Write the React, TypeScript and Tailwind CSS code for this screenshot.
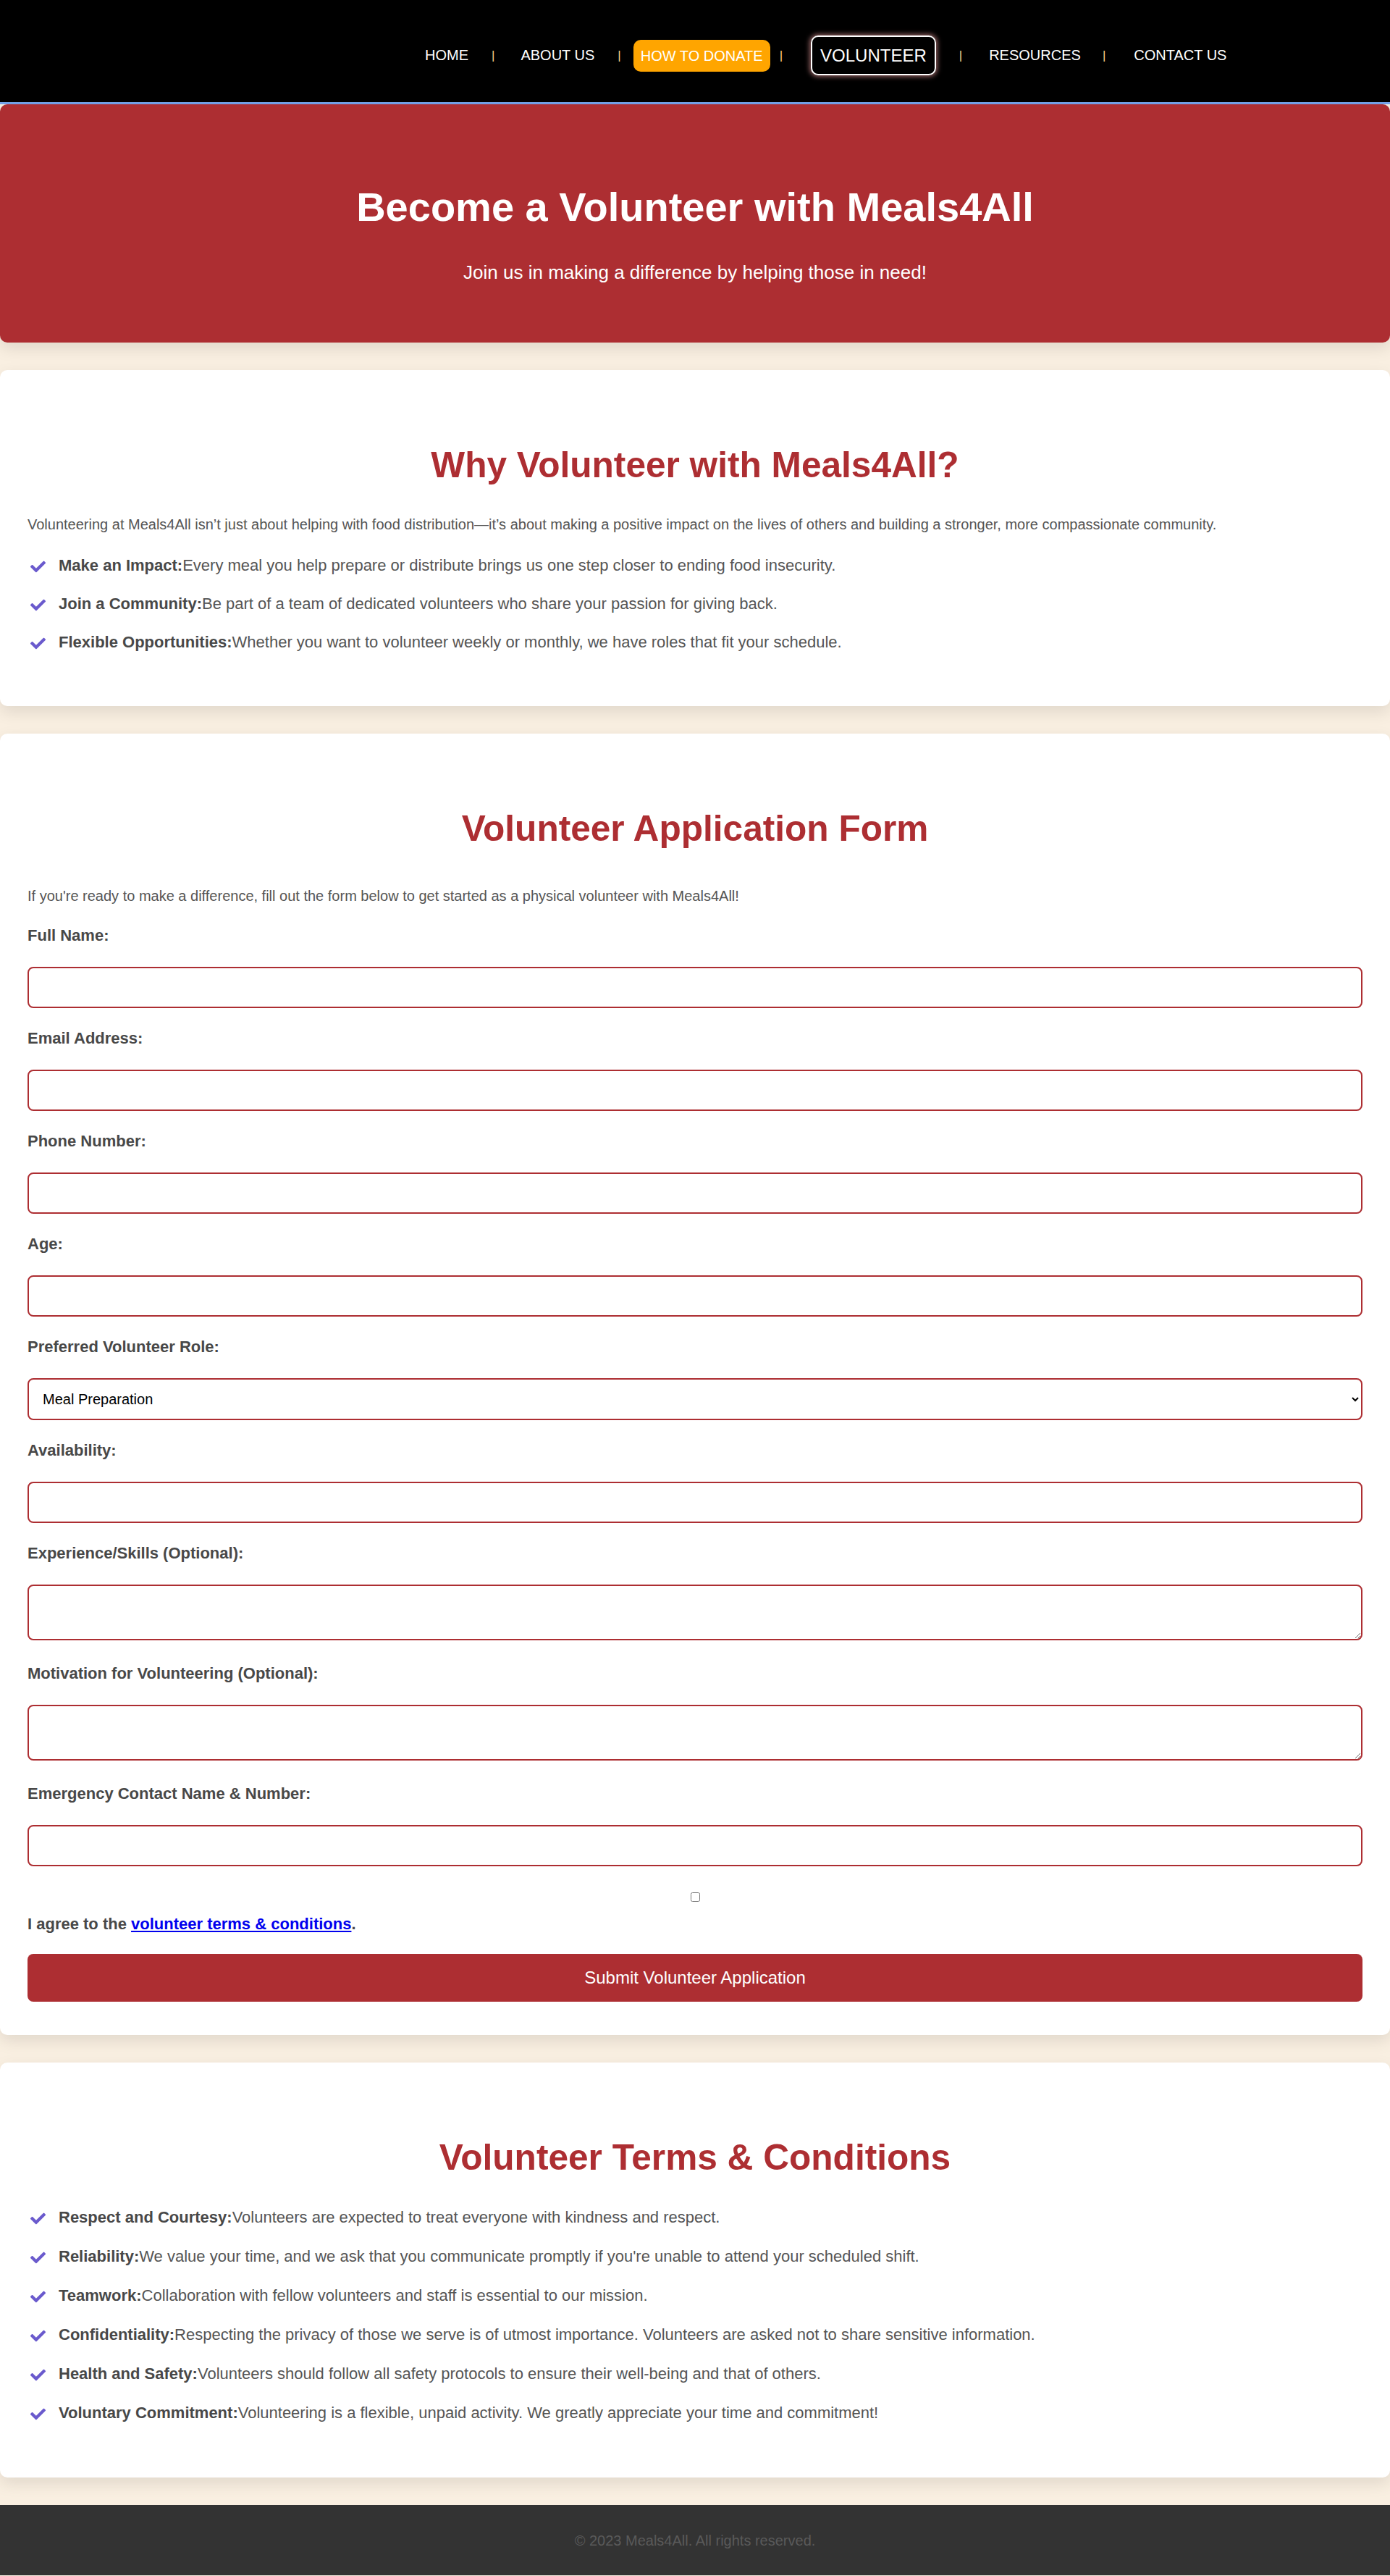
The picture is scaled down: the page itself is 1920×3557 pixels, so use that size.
import React from 'react';
import { FaCheck } from 'react-icons/fa';

const red = 'text-[#ad2e32]';

const whyItems = [
  ['Make an Impact:', 'Every meal you help prepare or distribute brings us one step closer to ending food insecurity.'],
  ['Join a Community:', 'Be part of a team of dedicated volunteers who share your passion for giving back.'],
  ['Flexible Opportunities:', 'Whether you want to volunteer weekly or monthly, we have roles that fit your schedule.'],
];

const terms = [
  ['Respect and Courtesy:', 'Volunteers are expected to treat everyone with kindness and respect.'],
  ['Reliability:', "We value your time, and we ask that you communicate promptly if you're unable to attend your scheduled shift."],
  ['Teamwork:', 'Collaboration with fellow volunteers and staff is essential to our mission.'],
  ['Confidentiality:', 'Respecting the privacy of those we serve is of utmost importance. Volunteers are asked not to share sensitive information.'],
  ['Health and Safety:', 'Volunteers should follow all safety protocols to ensure their well-being and that of others.'],
  ['Voluntary Commitment:', 'Volunteering is a flexible, unpaid activity. We greatly appreciate your time and commitment!'],
];

const CheckList = ({ items, gap }: { items: string[][]; gap: string }) => (
  <ul className={`flex flex-col ${gap}`}>
    {items.map(([title, text]) => (
      <li key={title} className="flex items-start gap-[18px] text-[22px] leading-[25px] text-[#555]">
        <FaCheck className="ml-[4px] mt-[4px] w-[21px] h-[21px] shrink-0 text-[#6a5acd]" />
        <span>
          <strong className="font-bold text-[#484848]">{title}</strong>
          {text}
        </span>
      </li>
    ))}
  </ul>
);

const Label = ({ children }: { children: React.ReactNode }) => (
  <label className="block text-[22px] leading-[25px] font-bold text-[#484848] mb-[31px]">{children}</label>
);

const inputCls =
  'block w-full h-[57px] border-2 border-[#ad2e32] rounded-[8px] px-[15px] text-[20px] bg-white mb-[29px]';
const areaCls =
  'block w-full h-[77px] border-2 border-[#ad2e32] rounded-[8px] px-[15px] py-[10px] text-[20px] bg-white mb-[33px]';

const Sep = ({ ml }: { ml: string }) => (
  <span className={`${ml} text-[17px] leading-[18px] text-[#ffd28a]`}>|</span>
);

export default function App() {
  return (
    <div className="min-h-screen bg-[#f9efe1] font-['Liberation_Sans',Arial,sans-serif]">
      {/* Navigation */}
      <nav className="h-[144px] bg-black border-b-[3px] border-[#74a3ea] flex items-center pl-[577px] pt-[12px] text-white text-[20px]">
        <a className="px-[10px] leading-[23px]">HOME</a>
        <Sep ml="ml-[22px]" />
        <a className="ml-[26px] px-[10px] leading-[23px]">ABOUT US</a>
        <Sep ml="ml-[22px]" />
        <a className="ml-[17px] px-[10px] h-[44px] flex items-center rounded-[10px] bg-[#ffa500]">HOW TO DONATE</a>
        <Sep ml="ml-[13px]" />
        <a className="ml-[39px] px-[11px] h-[55px] flex items-center rounded-[10px] border-2 border-white text-[24px] shadow-[0_0_6px_2px_rgba(255,170,170,0.55)]">
          VOLUNTEER
        </a>
        <Sep ml="ml-[32px]" />
        <a className="ml-[27px] px-[10px] leading-[23px]">RESOURCES</a>
        <Sep ml="ml-[20px]" />
        <a className="ml-[29px] px-[10px] leading-[23px]">CONTACT US</a>
      </nav>

      {/* Hero */}
      <header className="bg-[#ad2e32] rounded-[10px] shadow-[0_8px_22px_rgba(0,0,0,0.1)] text-white text-center pt-[110px] pb-[82px]">
        <h1 className="text-[56px] leading-[64px] font-bold">Become a Volunteer with Meals4All</h1>
        <p className="mt-[43px] text-[26px] leading-[30px]">Join us in making a difference by helping those in need!</p>
      </header>

      <main className="mt-[38px] flex flex-col gap-[38px]">
        {/* Why volunteer */}
        <section className="bg-white rounded-[10px] shadow-[0_8px_22px_rgba(0,0,0,0.1)] px-[38px] pt-[103px] pb-[76px]">
          <h2 className={`text-[49.6px] leading-[57px] font-bold text-center ${red}`}>Why Volunteer with Meals4All?</h2>
          <p className="mt-[42px] mb-[32px] text-[20px] leading-[23px] text-[#555]">
            Volunteering at Meals4All isn’t just about helping with food distribution—it’s about making a positive impact on
            the lives of others and building a stronger, more compassionate community.
          </p>
          <CheckList items={whyItems} gap="gap-[28px]" />
        </section>

        {/* Application form */}
        <section className="bg-white rounded-[10px] shadow-[0_8px_22px_rgba(0,0,0,0.1)] px-[38px] pt-[103px] pb-[46px]">
          <h2 className={`text-[49.6px] leading-[57px] font-bold text-center ${red}`}>Volunteer Application Form</h2>
          <p className="mt-[53px] mb-[30px] text-[20px] leading-[23px] text-[#555]">
            If you're ready to make a difference, fill out the form below to get started as a physical volunteer with Meals4All!
          </p>
          <form onSubmit={(e) => e.preventDefault()}>
            <Label>Full Name:</Label>
            <input type="text" className={inputCls} />
            <Label>Email Address:</Label>
            <input type="email" className={inputCls} />
            <Label>Phone Number:</Label>
            <input type="tel" className={inputCls} />
            <Label>Age:</Label>
            <input type="number" className={inputCls} />
            <Label>Preferred Volunteer Role:</Label>
            <select className="block w-full h-[58px] border-2 border-[#ad2e32] rounded-[8px] px-[15px] text-[20px] text-black bg-white mb-[29px]">
              <option>Meal Preparation</option>
              <option>Food Distribution</option>
              <option>Delivery Driver</option>
              <option>Event Support</option>
            </select>
            <Label>Availability:</Label>
            <input type="text" className={inputCls} />
            <Label>Experience/Skills (Optional):</Label>
            <textarea className={areaCls} />
            <Label>Motivation for Volunteering (Optional):</Label>
            <textarea className={areaCls} />
            <Label>Emergency Contact Name &amp; Number:</Label>
            <input type="text" className={inputCls} />
            <input type="checkbox" className="block mx-auto mt-[36px] w-[13px] h-[13px]" />
            <p className="mt-[18px] text-[22px] leading-[25px] font-bold text-[#484848]">
              I agree to the{' '}
              <a className="text-[#0000ee] underline">volunteer terms &amp; conditions</a>.
            </p>
            <button
              type="submit"
              className="mt-[29px] w-full h-[66px] rounded-[8px] bg-[#ad2e32] text-white text-[24px] flex items-center justify-center"
            >
              Submit Volunteer Application
            </button>
          </form>
        </section>

        {/* Terms */}
        <section className="bg-white rounded-[10px] shadow-[0_8px_22px_rgba(0,0,0,0.1)] px-[38px] pt-[103px] pb-[77px]">
          <h2 className={`text-[49.6px] leading-[57px] font-bold text-center mb-[41px] ${red}`}>Volunteer Terms &amp; Conditions</h2>
          <CheckList items={terms} gap="gap-[29px]" />
        </section>
      </main>

      <footer className="mt-[38px] bg-[#333] text-center pt-[38px] pb-[36px] text-[20px] leading-[23px] text-[#5a5a5a]">
        © 2023 Meals4All. All rights reserved.
      </footer>
    </div>
  );
}
